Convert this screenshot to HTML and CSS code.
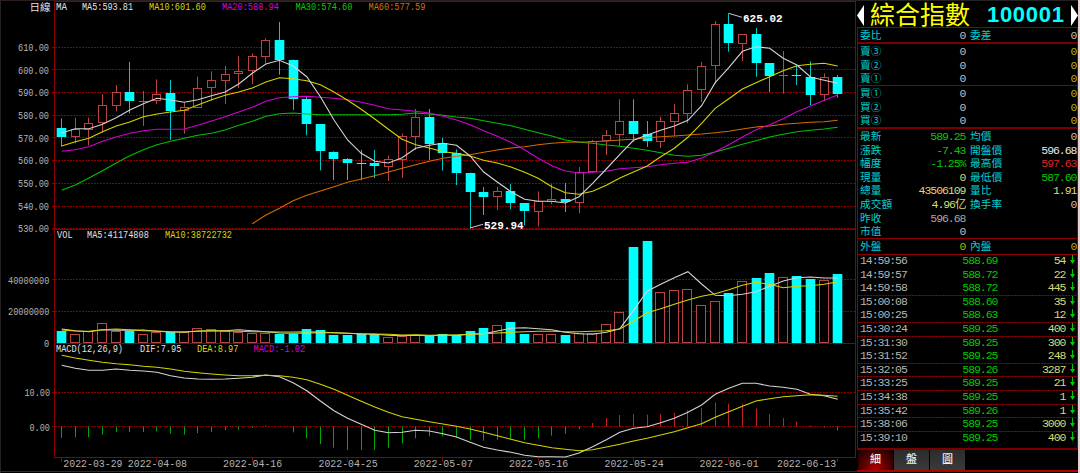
FILE: index.html
```html
<!DOCTYPE html>
<html lang="zh-Hant">
<head>
    <meta charset="UTF-8">
    <meta name="viewport" content="width=device-width, initial-scale=1.0">
    <title>綜合指數 100001</title>
    <link rel="stylesheet" href="styles.css">
</head>
<body>
    <div class="terminal">
        <svg class="chart" id="chart" width="857" height="473"></svg>

        <div class="side">
            <div class="title">
                <svg class="arrow" width="7" height="21"><path d="M7 0 V21 L0 10.5Z" /></svg>
                <span class="name">綜合指數</span>
                <span class="code">100001</span>
                <svg class="arrow" width="7" height="21"><path d="M0 0 V21 L7 10.5Z" /></svg>
            </div>

            <div class="quote">
                <div class="block ratio">
                    <div class="row"><b>委比</b><i>0</i><b>委差</b><i>0</i></div>
                </div>
                <div class="block sell">
                    <div class="row"><b>賣③</b><i>0</i><b></b><i class="dark">0</i></div>
                    <div class="row"><b>賣②</b><i>0</i><b></b><i class="dark">0</i></div>
                    <div class="row"><b>賣①</b><i>0</i><b></b><i class="dark">0</i></div>
                </div>
                <div class="block buy">
                    <div class="row"><b>買①</b><i>0</i><b></b><i class="dark">0</i></div>
                    <div class="row"><b>買②</b><i>0</i><b></b><i class="dark">0</i></div>
                    <div class="row"><b>買③</b><i>0</i><b></b><i class="dark">0</i></div>
                </div>
                <div class="block stats">
                    <div class="row"><b>最新</b><i class="down">589.25</i><b>均價</b><i>0</i></div>
                    <div class="row"><b>漲跌</b><i class="down">-7.43</i><b>開盤價</b><i class="white">596.68</i></div>
                    <div class="row"><b>幅度</b><i class="down">-1.25%</i><b>最高價</b><i class="up">597.63</i></div>
                    <div class="row"><b>現量</b><i class="amount">0</i><b>最低價</b><i class="down">587.60</i></div>
                    <div class="row"><b>總量</b><i class="amount">43506109</i><b>量比</b><i class="amount">1.91</i></div>
                    <div class="row"><b>成交額</b><i class="amount">4.96亿</i><b>換手率</b><i>0</i></div>
                    <div class="row"><b>昨收</b><i class="gray">596.68</i></div>
                    <div class="row"><b>市值</b><i>0</i></div>
                </div>
                <div class="block inout">
                    <div class="row"><b>外盤</b><i class="dark">0</i><b>內盤</b><i class="dark">0</i></div>
                </div>
                <div class="ticks" id="ticks"></div>
            </div>

            <div class="tabs">
                <div class="tab active">細</div>
                <div class="tab">盤</div>
                <div class="tab">圖</div>
            </div>
        </div>
    </div>

    <script src="chart.js"></script>
</body>
</html>
```

FILE: styles.css
```css
html,
body
{
    margin: 0;
    padding: 0;
    background: #000;
}

.terminal
{
    display: grid;
    grid-template-columns: 857px 221px;
    width: 1078px;
    height: 473px;
    overflow: hidden;
    border-right: 2px solid #e6d2d2;
    background: #000;
    font-family: "Liberation Mono", "Noto Sans CJK TC", monospace;
}

/* chart */
.chart
{
    display: block;
    font-size: 11.5px;
}

.chart .mark
{
    font-family: "Liberation Mono", monospace;
    font-weight: bold;
}

.chart .period
{
    font-family: "Noto Sans CJK TC", sans-serif;
    font-size: 10.5px;
}

/* right panel */
.side
{
    display: flex;
    flex-direction: column;
    height: 473px;
}

.title
{
    display: flex;
    align-items: center;
    height: 27px;
    box-sizing: border-box;
    padding-top: 2px;
    border-top: 1px solid #222;
    white-space: nowrap;
}

.arrow
{
    flex: none;
    fill: #fff;
}

.name
{
    width: 117px;
    margin: -5px 0 0 6px;
    color: #ff0;
    font-family: "Noto Sans CJK TC", sans-serif;
    font-size: 25px;
    font-weight: 400;
    line-height: 24px;
}

.code
{
    width: 84px;
    color: #0ff;
    font-family: "Liberation Sans", sans-serif;
    font-size: 22px;
    font-weight: bold;
    letter-spacing: .7px;
    line-height: 24px;
}

.quote
{
    box-sizing: border-box;
    height: 423px;
    border: 1px solid #900000;
    border-bottom: 2px solid #7a0000;
}

.block
{
    box-sizing: border-box;
    border-bottom: 1px solid #900000;
}

.ratio
{
    height: 16px;
    border-bottom: 2px solid #7a0000;
}

.sell
{
    height: 42px;
}

.buy
{
    height: 43px;
    border-bottom: 2px solid #7a0000;
}

.stats
{
    height: 110px;
}

.inout
{
    height: 16px;
}

.row
{
    display: grid;
    grid-template-columns: 36px 70px 36px 70px;
    height: 13.62px;
    padding-left: 2px;
    line-height: 13.6px;
    white-space: nowrap;
}

.row b:nth-child(3)
{
    margin-left: 4px;
}

.row i
{
    line-height: 15px;
}

.row i:nth-child(4)
{
    margin-right: -5px;
}

b
{
    color: #00d0d0;
    font-family: "Noto Sans CJK TC", sans-serif;
    font-size: 10.7px;
    font-weight: 400;
}

i
{
    color: #c0c0c0;
    font-size: 11.5px;
    font-style: normal;
    letter-spacing: -1.05px;
    padding-right: .6px;
    text-align: right;
}

.white { color: #e8e8e8; }
.gray { color: #a8a8a8; }
.dark { color: #b4b400; }
.amount { color: #dada78; }
.down { color: #00c800; }
.up { color: #dc2828; }

/* trades */
.ticks
{
    margin-top: -1px;
}

.tick
{
    display: grid;
    grid-template-columns: 60px 78px 68px 12px;
    box-sizing: border-box;
    height: 13.62px;
    padding-left: 2px;
    line-height: 10px;
}

.tick.line
{
    background: repeating-linear-gradient(90deg, #8c0000 0 2px, #3c0000 2px 3px) 0 0 / 100% 1px no-repeat;
}

.tick i
{
    line-height: 13px;
}

.tick .time
{
    color: #b4b4b4;
    text-align: left;
}

.tick svg
{
    margin: 1px 0 0 3px;
    stroke: #00c800;
    fill: #00c800;
}

/* tabs */
.tabs
{
    display: flex;
    gap: 1px;
    height: 20px;
    padding-left: 1px;
    border-bottom: 2px solid #b00000;
}

.tab
{
    width: 35px;
    background: linear-gradient(#2c2c2c, #3a3a3a);
    color: #eee;
    font: 500 11px/16px "Noto Sans CJK TC", sans-serif;
    text-align: center;
}

.tab.active
{
    background: radial-gradient(ellipse at 50% 100%, #b80000, #5a0000 50%, #180000 100%);
}
```

FILE: chart.js
```js
var svg = document.getElementById("chart");
var NS = "http://www.w3.org/2000/svg";

// all series are stored in thirds of a pixel
var U = 3;
var LOWER = 675;

function add(tag, attrs, text)
{
    var el = document.createElementNS(NS, tag);
    for (var k in attrs) {
        el.setAttribute(k, attrs[k]);
    }
    if (text) {
        el.textContent = text;
    }
    svg.appendChild(el);
}

function cx(i)
{
    return 61.7 + i * 13.614;
}

function line(x1, y1, x2, y2, color, dash)
{
    add("line", {x1: x1, y1: y1, x2: x2, y2: y2, stroke: color, "stroke-dasharray": dash || "none"});
}

function label(x, y, text, color, step, cls)
{
    add("text", {x: x, y: y, fill: color, "class": cls || "", textLength: (text.length * step).toFixed(1), lengthAdjust: "spacingAndGlyphs"}, text);
}

function curve(values, color, offset, start)
{
    var pts = values.map(function(v, i) {
        return cx(i + (start || 0)).toFixed(1) + "," + ((v + offset) / U).toFixed(1);
    });
    add("polyline", {points: pts.join(" "), fill: "none", stroke: color, "stroke-width": 1.1});
}

function box(i, top, bottom, up, wide)
{
    var x = Math.floor(cx(i)) - 4 - wide;
    var t = Math.round(top / U);
    var b = Math.max(Math.round(bottom / U), t + 1);
    if (up && b - t > 1) {
        add("rect", {x: x + .5, y: t + .5, width: 8 + wide, height: Math.max(b - t - 1, 1), fill: "#000", stroke: "#b84444"});
    } else {
        add("rect", {x: up ? x : x - .3, y: t, width: up ? 9 : 9.6, height: b - t, fill: up ? "#d04c4c" : "#00ffff"});
    }
}

// frame and grid
line(0.5, 0, 0.5, 473, "#222");
line(0, 0.5, 857, 0.5, "#2a1c1c");
[47, 69, 92, 115, 137, 160, 183, 206, 228, 279, 311, 392, 426].forEach(function(y) {
    line(52, y + .5, 855, y + .5, "#8c0000", "2 1");
});
[1.5, 229.5, 343.5, 457.5].forEach(function(y) {
    line(54, y, 856, y, "#900000");
});
line(54.5, 1, 54.5, 458, "#900000");
line(855.5, 1, 855.5, 458, "#900000");
line(0, 471.5, 857, 471.5, "#900000");
[0, 7, 14, 21, 28, 35, 42, 49, 57].forEach(function(i) {
    line(Math.floor(cx(i)) + .5, 458, Math.floor(cx(i)) + .5, 462, "#900000");
});

// kind, high, body top, body bottom, low
var candles = [
    "C 355 384 411 440", "R 353 388 412 430", "R 353 370 389 437", "R 283 316 370 398", "R 255 277 317 334",
    "C 186 277 303 340", "R 273 303 304 378", "R 238 281 302 312", "C 240 280 332 420", "R 307 322 334 401",
    "R 230 265 323 323", "R 214 241 265 302", "R 198 223 242 312", "R 168 213 223 264", "R 160 169 213 252",
    "R 115 121 170 190", "C 66 121 179 224", "C 179 179 298 330", "C 290 298 373 406", "C 373 373 454 511",
    "C 454 455 478 540", "C 474 478 490 540", "C 450 490 492 541", "C 450 490 498 534", "R 467 478 500 543",
    "R 400 409 479 534", "R 327 350 410 450", "C 327 350 431 480", "C 414 430 459 512", "C 448 459 518 555",
    "C 518 518 577 684", "C 561 577 590 645", "R 560 572 592 630", "C 552 572 609 628", "C 609 609 634 676",
    "R 574 603 635 680", "R 551 598 605 613", "C 549 598 606 636", "R 501 517 608 640", "R 420 423 517 517",
    "R 390 404 423 465", "R 298 364 405 438", "C 298 364 402 425", "C 363 403 424 441", "R 350 364 426 444",
    "R 312 340 365 407", "R 253 269 341 370", "R 186 197 270 306", "R 63 73 199 250", "C 40 73 130 155",
    "R 103 103 132 183", "C 84 102 189 230", "C 189 189 228 276", "R 153 226 228 281", "C 198 226 228 255",
    "C 184 230 284 315", "R 220 230 286 302", "C 225 230 281 293"
];
var vol = [318, 328, 318, 293, 318, 317, 327, 321, 322, 322, 309, 311, 318, 320, 324, 324, 328, 328, 313, 316,
    330, 331, 328, 328, 337, 333, 330, 332, 327, 331, 318, 308, 301, 290, 326, 328, 326, 331, 325, 325,
    298, 262, 66, 47, 202, 196, 193, 240, 227, 204, 169, 160, 145, 157, 154, 162, 165, 148];
var macd = [639, 637, 637, 629, 621, 621, 621, 619, 626, 629, 624, 621, 615, 614, 609, 601, 604, 622, 640, 657,
    668, 675, 675, 675, 668, 655, 640, 634, 634, 637, 644, 647, 644, 642, 644, 640, 632, 626, 613, 594,
    579, 570, 567, 569, 567, 563, 555, 548, 533, 536, 536, 551, 567, 579, 589, 601, 608, 616];

// candle, volume bar and macd bar of each day
candles.forEach(function(c, i) {
    var p = c.split(" ");
    var up = p[0] == "R";
    var x = Math.floor(cx(i)) + .5;
    line(x, p[1] / U, x, p[4] / U, up ? "#b84444" : "#00c8c8");
    box(i, +p[2], +p[3], up, 0);
    box(i, vol[i] + LOWER, 353 + LOWER, up, up ? 1 : 0);
    if (macd[i] != 604) {
        line(x, 426.5, x, (macd[i] + LOWER) / U, macd[i] > 604 ? "#00a800" : "#c02020");
    }
});

// moving averages
curve([571, 555, 534, 512, 489, 467, 449, 434, 424, 415, 406, 400, 390, 376, 364, 349, 341, 339, 342, 344,
    344, 344, 344, 344, 344, 343, 339, 342, 346, 351, 355, 362, 370, 377, 388, 398, 408, 420, 427, 430,
    435, 439, 445, 451, 458, 466, 469, 466, 456, 445, 433, 422, 411, 403, 395, 391, 387, 382], "#00c000", 0);
curve([671, 645, 625, 602, 586, 573, 560, 547, 537, 527, 516, 505, 494, 484, 475, 469, 464, 457, 450, 444,
    440, 434, 430, 427, 426, 425, 423, 420, 418, 413, 410, 408, 405, 402, 398, 394, 387, 381, 378, 373,
    370, 367, 365, 361], "#d46c00", 0, 14);
curve([454, 449, 440, 424, 411, 400, 392, 388, 388, 387, 376, 363, 350, 336, 322, 304, 293, 290, 289, 292,
    295, 299, 307, 316, 326, 330, 334, 339, 348, 360, 374, 392, 409, 427, 449, 475, 497, 513, 519, 517,
    514, 506, 503, 500, 494, 490, 487, 474, 455, 434, 411, 389, 374, 356, 335, 318, 301, 285], "#d400d4", 0);
curve([438, 425, 415, 395, 378, 366, 350, 342, 336, 331, 315, 299, 286, 276, 264, 246, 233, 236, 242, 254,
    276, 301, 328, 357, 388, 418, 434, 444, 455, 460, 468, 481, 489, 501, 517, 535, 560, 578, 583, 574,
    556, 534, 516, 498, 470, 445, 412, 370, 325, 296, 267, 248, 230, 212, 197, 193, 190, 198], "#d4d400", 0);
curve([399, 386, 386, 373, 353, 330, 311, 295, 300, 307, 299, 287, 276, 252, 220, 192, 181, 198, 230, 290,
    360, 420, 460, 484, 489, 473, 445, 436, 430, 436, 468, 516, 546, 575, 598, 604, 604, 609, 590, 550,
    507, 463, 421, 405, 391, 378, 361, 317, 248, 203, 154, 140, 145, 175, 195, 231, 241, 250], "#d4d4d4", 0);

// volume averages
curve([312, 317, 320, 314, 316, 316, 315, 319, 321, 321, 319, 317, 317, 314, 317, 320, 324, 325, 324, 323,
    323, 325, 327, 328, 331, 332, 331, 332, 331, 331, 328, 326, 318, 310, 308, 311, 314, 322, 326, 328,
    322, 311, 256, 199, 178, 158, 140, 177, 211, 212, 208, 200, 184, 168, 158, 156, 159, 159], "#d4d4d4", LOWER);
curve([315, 318, 319, 314, 312, 314, 317, 318, 320, 321, 318, 317, 318, 319, 320, 320, 321, 321, 320, 321,
    323, 325, 326, 327, 328, 330, 329, 331, 330, 330, 328, 326, 324, 322, 320, 319, 319, 320, 320, 319,
    317, 312, 289, 263, 251, 238, 225, 214, 206, 194, 181, 172, 178, 188, 184, 182, 178, 170], "#d4d400", LOWER);

// DIF and DEA
curve([421, 430, 436, 436, 432, 436, 438, 442, 452, 459, 462, 463, 462, 460, 457, 450, 455, 473, 497, 528,
    557, 580, 598, 616, 623, 622, 616, 618, 626, 636, 652, 667, 675, 682, 691, 695, 695, 696, 684, 665,
    644, 622, 610, 605, 593, 580, 562, 540, 508, 490, 475, 475, 483, 487, 493, 508, 512, 523], "#d4d4d4", LOWER);
curve([391, 399, 406, 412, 416, 419, 424, 427, 432, 439, 443, 447, 450, 452, 452, 451, 452, 457, 464, 478,
    493, 511, 529, 546, 562, 575, 583, 590, 597, 604, 612, 622, 632, 643, 653, 661, 668, 673, 677, 674,
    666, 658, 648, 640, 630, 620, 608, 596, 577, 560, 544, 528, 521, 515, 512, 509, 511, 514], "#d4d400", LOWER);

// high and low marks
line(728.7, 13.3, 742, 17.3, "#ccc");
label(743, 22, "625.02", "#fff", 6.6, "mark");
line(470, 228, 483, 224.3, "#ccc");
label(484, 229, "529.94", "#fff", 6.6, "mark");

// axis
["610.00", "600.00", "590.00", "580.00", "570.00", "560.00", "550.00", "540.00", "530.00"].forEach(function(t, i) {
    label(18, 51 + i * 22.65, t, "#b4b4b4", 5.17);
});
label(8, 283.5, "40000000", "#b4b4b4", 5.17);
label(8, 315, "20000000", "#b4b4b4", 5.17);
label(44, 347, "0", "#b4b4b4", 5.17);
label(24.5, 396, "10.00", "#b4b4b4", 5.1);
label(29.5, 431, "0.00", "#b4b4b4", 5.1);
[["2022-03-29", 63.3], ["2022-04-08", 127.8], ["2022-04-16", 223], ["2022-04-25", 318.5], ["2022-05-07", 413.7],
    ["2022-05-16", 509], ["2022-05-24", 604.5], ["2022-06-01", 699.5], ["2022-06-13", 777]].forEach(function(d) {
    label(d[1], 466.5, d[0], "#b4b4b4", 5.92);
});

// indicator names
label(29.5, 11, "日線", "#e0e0e0", 10.5, "period");
label(56, 10, "MA", "#e0e0e0", 5.5);
label(82, 10, "MA5:593.81", "#e0e0e0", 5.1);
label(149, 10, "MA10:601.60", "#d8d800", 5.17);
label(222, 10, "MA20:588.94", "#d800d8", 5.17);
label(295.5, 10, "MA30:574.60", "#00d000", 5.17);
label(368.5, 10, "MA60:577.59", "#d87000", 5.17);
label(57, 237.5, "VOL", "#e0e0e0", 5.2);
label(87, 237.5, "MA5:41174808", "#e0e0e0", 5.15);
label(165, 237.5, "MA10:38722732", "#d8d800", 5.15);
label(56, 352, "MACD(12,26,9)", "#e0e0e0", 5.15);
label(140, 352, "DIF:7.95", "#e0e0e0", 5.17);
label(197, 352, "DEA:8.97", "#d8d800", 5.17);
label(253.5, 352, "MACD:-1.02", "#d800d8", 5.17);

// time, price, volume, divider above
var ticks = [
    ["14:59:56", "588.69", "54", 0], ["14:59:57", "588.72", "22", 0], ["14:59:58", "588.72", "445", 0],
    ["15:00:08", "588.60", "35", 1], ["15:00:25", "588.63", "12", 0], ["15:30:24", "589.25", "400", 1],
    ["15:31:30", "589.25", "300", 1], ["15:31:52", "589.25", "248", 0], ["15:32:05", "589.26", "3287", 1],
    ["15:33:25", "589.25", "21", 1], ["15:34:38", "589.25", "1", 1], ["15:35:42", "589.26", "1", 1],
    ["15:38:06", "589.25", "3000", 1], ["15:39:10", "589.25", "400", 1]
];
document.getElementById("ticks").innerHTML = ticks.map(function(t) {
    return '<div class="tick' + (t[3] ? ' line' : '') + '"><i class="time">' + t[0] + '</i><i class="down">' + t[1] +
        '</i><i class="amount">' + t[2] + '</i><svg width="7" height="9"><path d="M3.5 0V6" /><path stroke="none" d="M1 5H6L3.5 9Z" /></svg></div>';
}).join("");
```
